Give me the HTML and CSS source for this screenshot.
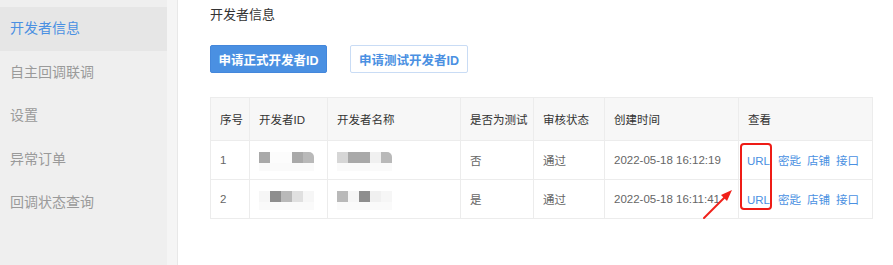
FILE: index.html
```html
<!DOCTYPE html>
<html lang="zh-CN">
<head>
    <meta charset="UTF-8">
    <title>开发者信息</title>
    <link rel="stylesheet" href="styles.css">
</head>
<body>
    <div class="layout">
        <div class="sidebar">
            <ul class="menu">
                <li class="menu-item active">开发者信息</li>
                <li class="menu-item">自主回调联调</li>
                <li class="menu-item">设置</li>
                <li class="menu-item">异常订单</li>
                <li class="menu-item">回调状态查询</li>
            </ul>
        </div>
        <div class="gutter"></div>
        <div class="main">
            <div class="page-title">开发者信息</div>
            <div class="actions">
                <button class="btn btn-primary">申请正式开发者ID</button>
                <button class="btn btn-ghost">申请测试开发者ID</button>
            </div>

            <div class="table-wrap">
                <table class="dev-table">
                    <thead>
                        <tr>
                            <th class="c-no">序号</th>
                            <th class="c-id">开发者ID</th>
                            <th class="c-name">开发者名称</th>
                            <th class="c-test">是否为测试</th>
                            <th class="c-status">审核状态</th>
                            <th class="c-time">创建时间</th>
                            <th class="c-view">查看</th>
                        </tr>
                    </thead>
                    <tbody>
                        <tr>
                            <td>1</td>
                            <td>
                                <div class="mosaic">
                                    <span class="px g-a"></span><span class="px g-w"></span><span class="px g-w"></span><span class="px g-a"></span><span class="px g-b end"></span>
                                </div>
                            </td>
                            <td>
                                <div class="mosaic">
                                    <span class="px g-c"></span><span class="px g-a"></span><span class="px g-a"></span><span class="px g-e"></span><span class="px g-b end"></span>
                                </div>
                            </td>
                            <td>否</td>
                            <td>通过</td>
                            <td>2022-05-18 16:12:19</td>
                            <td class="links"><a>URL</a><a>密匙</a><a>店铺</a><a>接口</a></td>
                        </tr>
                        <tr>
                            <td>2</td>
                            <td>
                                <div class="mosaic">
                                    <span class="px g-f"></span><span class="px g-d"></span><span class="px g-b"></span><span class="px g-c2"></span><span class="px g-f"></span>
                                </div>
                            </td>
                            <td>
                                <div class="mosaic">
                                    <span class="px g-b"></span><span class="px g-f"></span><span class="px g-d"></span><span class="px g-e"></span><span class="px g-f"></span>
                                </div>
                            </td>
                            <td>是</td>
                            <td>通过</td>
                            <td>2022-05-18 16:11:41</td>
                            <td class="links"><a>URL</a><a>密匙</a><a>店铺</a><a>接口</a></td>
                        </tr>
                    </tbody>
                </table>
                <!-- annotation drawn over the screenshot -->
                <div class="mark-box"></div>
                <svg class="mark-arrow" width="34" height="34" viewBox="0 0 34 34">
                    <line x1="2" y1="31" x2="24" y2="9" stroke="#f0201a" stroke-width="2" stroke-linecap="round"/>
                    <polygon points="30,3 19,8 25,14" fill="#f0201a"/>
                </svg>
            </div>
        </div>
    </div>
</body>
</html>
```

FILE: styles.css
```css
body {
    margin: 0;
    font-family: "Liberation Sans", "Noto Sans CJK SC", sans-serif;
    background: #fff;
    color: #333;
}
.layout {
    display: flex;
    height: 265px;
}
.sidebar {
    width: 167px;
    background: #efefef;
    padding-top: 7px;
}
.gutter {
    width: 10px;
    background: #f5f5f5;
    border-right: 1px solid #e8e8e8;
}
.menu {
    list-style: none;
    margin: 0;
    padding: 0;
}
.menu-item {
    height: 43.5px;
    line-height: 43px;
    padding-left: 10px;
    font-size: 14px;
    color: #9a9a9a;
}
.menu-item.active {
    background: #e6e6e6;
    color: #4a90e2;
}
.main {
    flex: 1;
    padding: 6px 0 0 32px;
}
.page-title {
    font-size: 13px;
    line-height: 18px;
    color: #333;
}
.actions {
    display: flex;
    gap: 23px;
    margin-top: 21px;
}
.btn {
    height: 28px;
    padding: 0;
    border-radius: 2px;
    font-family: inherit;
    font-size: 12.5px;
    font-weight: bold;
    cursor: pointer;
}
.btn-primary {
    width: 117px;
    background: #4a90e2;
    border: 1px solid #4487db;
    color: #fff;
}
.btn-ghost {
    width: 118px;
    background: #fff;
    border: 1px solid #c9dcf5;
    color: #4a90e2;
}
.table-wrap {
    position: relative;
    margin-top: 24px;
    width: 663px;
}
.dev-table {
    width: 663px;
    border-collapse: collapse;
    table-layout: fixed;
    font-size: 11.5px;
    border: 1px solid #ececec;
}
.dev-table th,
.dev-table td {
    text-align: left;
    padding: 0 0 0 9px;
    border: 1px solid #ececec;
    white-space: nowrap;
    overflow: hidden;
}
.dev-table th {
    height: 42px;
    background: #f7f7f7;
    font-weight: normal;
    color: #333;
}
.dev-table td {
    height: 38px;
    color: #666;
}
.c-no { width: 29px; }
.c-id { width: 68px; }
.c-name { width: 123px; }
.c-test { width: 63px; }
.c-status { width: 61px; }
.c-time { width: 124px; }
.links {
    padding-left: 8px !important;
}
.links a {
    color: #4a90e2;
    margin-right: 6px;
    cursor: pointer;
}
.links a:first-child {
    margin-right: 8px;
}
.mosaic {
    display: flex;
    height: 19px;
    margin-top: 2px;
}
.px {
    width: 11px;
    height: 11px;
    border-bottom: 8px solid #fafafa;
}
.px.end {
    border-radius: 0 5px 0 0;
}
.g-a { background: #a9a9a9; }
.g-b { background: #b9b9b9; }
.g-c { background: #d6d6d6; }
.g-c2 { background: #e0e0e0; }
.g-d { background: #8e8e8e; }
.g-e { background: #f0f0f0; }
.g-f { background: #f6f6f6; }
.g-w { background: #fcfcfc; }
.mark-box {
    position: absolute;
    left: 530px;
    top: 46px;
    width: 28px;
    height: 63px;
    border: 2px solid #ee1c16;
    border-radius: 4px;
}
.mark-arrow {
    position: absolute;
    left: 492px;
    top: 90px;
}
```
